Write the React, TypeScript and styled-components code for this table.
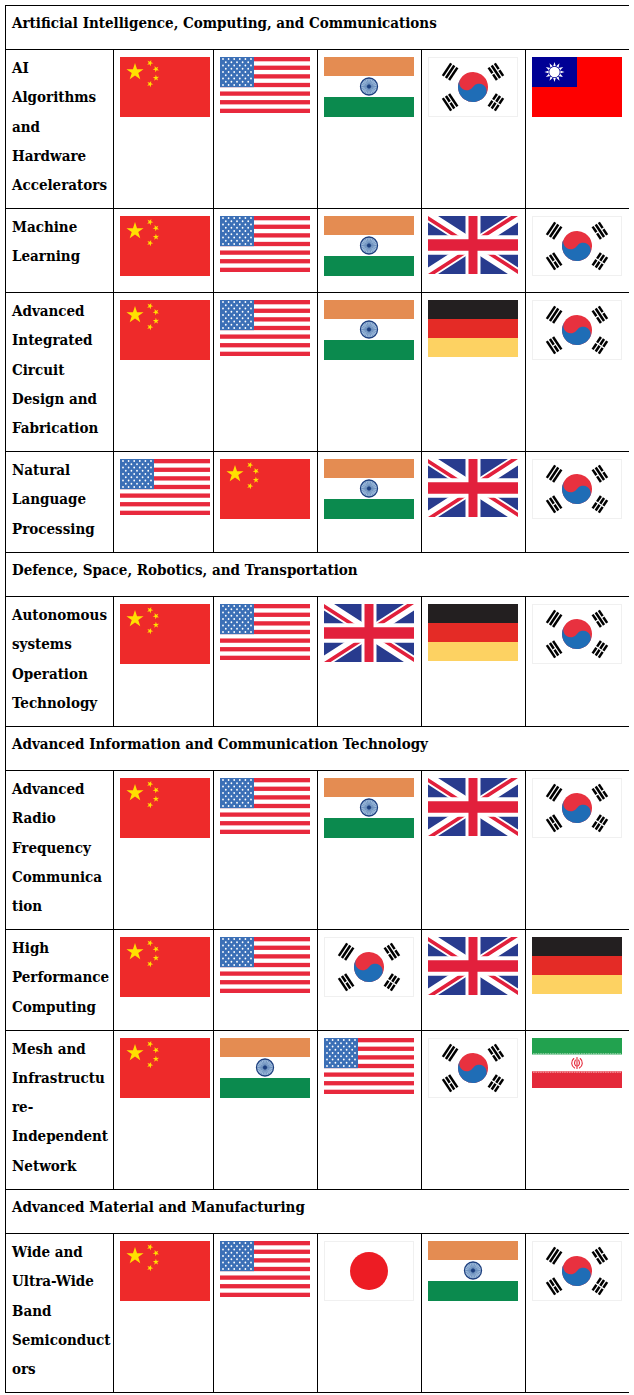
import * as React from "react";
import styled, { createGlobalStyle } from "styled-components";

type FlagCode = "cn" | "us" | "in" | "kr" | "tw" | "gb" | "de" | "jp" | "ir";

type Topic = {
  lines: string[];
  flags: FlagCode[];
};

type Section = {
  title: string;
  topics: Topic[];
};

const sections: Section[] = [
  {
    title: "Artificial Intelligence, Computing, and Communications",
    topics: [
      { lines: ["AI", "Algorithms", "and", "Hardware", "Accelerators"], flags: ["cn", "us", "in", "kr", "tw"] },
      { lines: ["Machine", "Learning"], flags: ["cn", "us", "in", "gb", "kr"] },
      { lines: ["Advanced", "Integrated", "Circuit", "Design and", "Fabrication"], flags: ["cn", "us", "in", "de", "kr"] },
      { lines: ["Natural", "Language", "Processing"], flags: ["us", "cn", "in", "gb", "kr"] },
    ],
  },
  {
    title: "Defence, Space, Robotics, and Transportation",
    topics: [
      { lines: ["Autonomous", "systems", "Operation", "Technology"], flags: ["cn", "us", "gb", "de", "kr"] },
    ],
  },
  {
    title: "Advanced Information and Communication Technology",
    topics: [
      { lines: ["Advanced", "Radio", "Frequency", "Communica", "tion"], flags: ["cn", "us", "in", "gb", "kr"] },
      { lines: ["High", "Performance", "Computing"], flags: ["cn", "us", "kr", "gb", "de"] },
      { lines: ["Mesh and", "Infrastructu", "re-", "Independent", "Network"], flags: ["cn", "in", "us", "kr", "ir"] },
    ],
  },
  {
    title: "Advanced Material and Manufacturing",
    topics: [
      { lines: ["Wide and", "Ultra-Wide", "Band", "Semiconduct", "ors"], flags: ["cn", "us", "jp", "in", "kr"] },
    ],
  },
];

const GlobalStyle = createGlobalStyle`
  body {
    margin: 5px;
    background: #fff;
  }
`;

const Table = styled.table`
  border-collapse: collapse;
  table-layout: fixed;
  width: 625px;
  font-family: "DejaVu Serif Condensed", "DejaVu Serif", "Liberation Serif", serif;
  font-stretch: semi-condensed;
  font-size: 15px;
  font-weight: bold;
  color: #000;
`;

const SectionCell = styled.td`
  border: 1px solid #000;
  padding: 3px 6px 11px;
  line-height: 29.25px;
  white-space: nowrap;
`;

const TopicCell = styled.td`
  border: 1px solid #000;
  padding: 4px 6px 8px;
  line-height: 29.2px;
  vertical-align: top;
  white-space: nowrap;
`;

const FlagCell = styled.td`
  border: 1px solid #000;
  padding: 7px 0 16px 6px;
  vertical-align: top;
`;

const FlagSvg = styled.svg`
  display: block;
  width: 90px;
`;

function starPoints(cx: number, cy: number, r: number, angle = -Math.PI / 2) {
  const pts: string[] = [];
  for (let i = 0; i < 10; i++) {
    const rad = i % 2 === 0 ? r : r * 0.382;
    const a = angle + (i * Math.PI) / 5;
    pts.push(`${(cx + rad * Math.cos(a)).toFixed(2)},${(cy + rad * Math.sin(a)).toFixed(2)}`);
  }
  return pts.join(" ");
}

function China() {
  const small = [
    [30, 6],
    [36, 12],
    [36, 21],
    [30, 27],
  ];
  return (
    <FlagSvg viewBox="0 0 90 60" height={60}>
      <rect width="90" height="60" fill="#ee2a2a" />
      <polygon points={starPoints(15, 15, 9)} fill="#ffe000" />
      {small.map(([x, y]) => (
        <polygon key={`${x}-${y}`} points={starPoints(x, y, 3.3, Math.atan2(15 - y, 15 - x))} fill="#ffe000" />
      ))}
    </FlagSvg>
  );
}

function UnitedStates() {
  const stripe = 56 / 13;
  const stars: [number, number][] = [];
  for (let row = 0; row < 9; row++) {
    const count = row % 2 === 0 ? 6 : 5;
    for (let col = 0; col < count; col++) {
      const x = row % 2 === 0 ? 3 + col * 5.6 : 5.8 + col * 5.6;
      stars.push([x, 2 + row * 3.25]);
    }
  }
  return (
    <FlagSvg viewBox="0 0 90 56" height={56}>
      <rect width="90" height="56" fill="#fff" />
      {Array.from({ length: 7 }, (_, i) => (
        <rect key={i} y={i * 2 * stripe} width="90" height={stripe} fill="#e8293d" />
      ))}
      <rect width="34" height={stripe * 7} fill="#3b6fb6" />
      {stars.map(([x, y], i) => (
        <circle key={i} cx={x} cy={y} r="0.9" fill="#fff" />
      ))}
    </FlagSvg>
  );
}

function India() {
  return (
    <FlagSvg viewBox="0 0 90 60" height={60}>
      <rect width="90" height="19" fill="#e48c52" />
      <rect y="19" width="90" height="21" fill="#fff" />
      <rect y="40" width="90" height="20" fill="#0b8a4e" />
      <circle cx="45" cy="29.5" r="8.5" fill="#a9c4e2" stroke="#1d3f7e" strokeWidth="1.3" />
      {Array.from({ length: 24 }, (_, i) => {
        const a = (i * Math.PI) / 12;
        return (
          <line
            key={i}
            x1="45"
            y1="29.5"
            x2={45 + 7.6 * Math.cos(a)}
            y2={29.5 + 7.6 * Math.sin(a)}
            stroke="#2d5a96"
            strokeWidth="0.45"
          />
        );
      })}
      <circle cx="45" cy="29.5" r="2" fill="#1d3f7e" />
    </FlagSvg>
  );
}

function Trigram({ rotate, breaks }: { rotate: number; breaks: boolean[] }) {
  return (
    <g transform={`rotate(${rotate})`}>
      {breaks.map((broken, i) => {
        const y = -25 + i * 3;
        return broken ? (
          <g key={i}>
            <line x1="-6" y1={y} x2="-0.5" y2={y} stroke="#000" strokeWidth="2" />
            <line x1="0.5" y1={y} x2="6" y2={y} stroke="#000" strokeWidth="2" />
          </g>
        ) : (
          <line key={i} x1="-6" y1={y} x2="6" y2={y} stroke="#000" strokeWidth="2" />
        );
      })}
    </g>
  );
}

function Korea() {
  return (
    <FlagSvg viewBox="-36 -24 72 48" height={60}>
      <rect x="-35.6" y="-23.6" width="71.2" height="47.2" fill="#fff" stroke="#f0f0f0" strokeWidth="0.8" />
      <Trigram rotate={-56.31} breaks={[false, false, false]} />
      <Trigram rotate={123.69} breaks={[true, true, true]} />
      <Trigram rotate={-123.69} breaks={[false, true, false]} />
      <Trigram rotate={56.31} breaks={[true, false, true]} />
      <g transform="rotate(-56.31)">
        <circle r="12" fill="#e8313f" />
        <path d="M0-12A6,6 0 0 0 0,0A6,6 0 0 1 0,12A12,12 0 0,1 0-12z" fill="#1f6db6" />
      </g>
    </FlagSvg>
  );
}

function Taiwan() {
  const rays: string[] = [];
  for (let i = 0; i < 12; i++) {
    const a = (i * Math.PI) / 6 - Math.PI / 2;
    const b = a - Math.PI / 12;
    const c = a + Math.PI / 12;
    rays.push(
      `${22.5 + 10 * Math.cos(a)},${15 + 10 * Math.sin(a)} ${22.5 + 5.6 * Math.cos(b)},${15 + 5.6 * Math.sin(b)} ${
        22.5 + 5.6 * Math.cos(c)
      },${15 + 5.6 * Math.sin(c)}`
    );
  }
  return (
    <FlagSvg viewBox="0 0 90 60" height={60}>
      <rect width="90" height="60" fill="#fe0000" />
      <rect width="45" height="30" fill="#000095" />
      {rays.map((p, i) => (
        <polygon key={i} points={p} fill="#fff" />
      ))}
      <circle cx="22.5" cy="15" r="6" fill="#000095" />
      <circle cx="22.5" cy="15" r="5.2" fill="#fff" />
    </FlagSvg>
  );
}

function UnitedKingdom() {
  const id = React.useId().replace(/:/g, "");
  return (
    <FlagSvg viewBox="0 0 60 30" height={58} preserveAspectRatio="none">
      <defs>
        <clipPath id={`s${id}`}>
          <path d="M0,0 v30 h60 v-30 z" />
        </clipPath>
        <clipPath id={`t${id}`}>
          <path d="M30,15 h30 v15 z v15 h-30 z h-30 v-15 z v-15 h30 z" />
        </clipPath>
      </defs>
      <g clipPath={`url(#s${id})`}>
        <path d="M0,0 v30 h60 v-30 z" fill="#283b8e" />
        <path d="M0,0 L60,30 M60,0 L0,30" stroke="#fff" strokeWidth="6" />
        <path d="M0,0 L60,30 M60,0 L0,30" clipPath={`url(#t${id})`} stroke="#e2203c" strokeWidth="4" />
        <path d="M30,0 v30 M0,15 h60" stroke="#fff" strokeWidth="10" />
        <path d="M30,0 v30 M0,15 h60" stroke="#e2203c" strokeWidth="6" />
      </g>
    </FlagSvg>
  );
}

function Germany() {
  return (
    <FlagSvg viewBox="0 0 90 57" height={57}>
      <rect width="90" height="19" fill="#231f20" />
      <rect y="19" width="90" height="19" fill="#e42b26" />
      <rect y="38" width="90" height="19" fill="#fdd262" />
    </FlagSvg>
  );
}

function Japan() {
  return (
    <FlagSvg viewBox="0 0 90 60" height={60}>
      <rect x="0.5" y="0.5" width="89" height="59" fill="#fff" stroke="#f0f0f0" />
      <circle cx="45" cy="30" r="19" fill="#ed1c24" />
    </FlagSvg>
  );
}

function Iran() {
  return (
    <FlagSvg viewBox="0 0 90 50" height={50}>
      <rect width="90" height="16.7" fill="#22a24f" />
      <rect y="16.7" width="90" height="16.6" fill="#fff" />
      <rect y="33.3" width="90" height="16.7" fill="#e4293a" />
      <line x1="1" y1="15.8" x2="89" y2="15.8" stroke="#bfe3c9" strokeWidth="0.9" strokeDasharray="1.6 0.8" />
      <line x1="1" y1="34.2" x2="89" y2="34.2" stroke="#f6c0c4" strokeWidth="0.9" strokeDasharray="1.6 0.8" />
      <g fill="none" stroke="#e4293a" strokeWidth="1.1" strokeLinecap="round">
        <path d="M45,19.5 V30.5" />
        <path d="M41.8,20.5 C38.8,23 39,28 42.6,30" />
        <path d="M48.2,20.5 C51.2,23 51,28 47.4,30" />
        <path d="M43.4,22 C42.2,24.5 42.6,27 44.2,28" />
        <path d="M46.6,22 C47.8,24.5 47.4,27 45.8,28" />
      </g>
    </FlagSvg>
  );
}

const flagComponents: Record<FlagCode, () => React.ReactElement> = {
  cn: China,
  us: UnitedStates,
  in: India,
  kr: Korea,
  tw: Taiwan,
  gb: UnitedKingdom,
  de: Germany,
  jp: Japan,
  ir: Iran,
};

function Flag({ code }: { code: FlagCode }) {
  const Component = flagComponents[code];
  return <Component />;
}

function TopicRow({ topic }: { topic: Topic }) {
  return (
    <tr>
      <TopicCell>
        {topic.lines.map((line, i) => (
          <React.Fragment key={i}>
            {i > 0 && <br />}
            {line}
          </React.Fragment>
        ))}
      </TopicCell>
      {topic.flags.map((code, i) => (
        <FlagCell key={i}>
          <Flag code={code} />
        </FlagCell>
      ))}
    </tr>
  );
}

export default function App() {
  return (
    <>
      <GlobalStyle />
      <Table>
        <colgroup>
          <col style={{ width: 108 }} />
          <col style={{ width: 100 }} />
          <col style={{ width: 104 }} />
          <col style={{ width: 104 }} />
          <col style={{ width: 104 }} />
          <col style={{ width: 104 }} />
        </colgroup>
        <tbody>
          {sections.map((section) => (
            <React.Fragment key={section.title}>
              <tr>
                <SectionCell colSpan={6}>{section.title}</SectionCell>
              </tr>
              {section.topics.map((topic) => (
                <TopicRow key={topic.lines.join(" ")} topic={topic} />
              ))}
            </React.Fragment>
          ))}
        </tbody>
      </Table>
    </>
  );
}
